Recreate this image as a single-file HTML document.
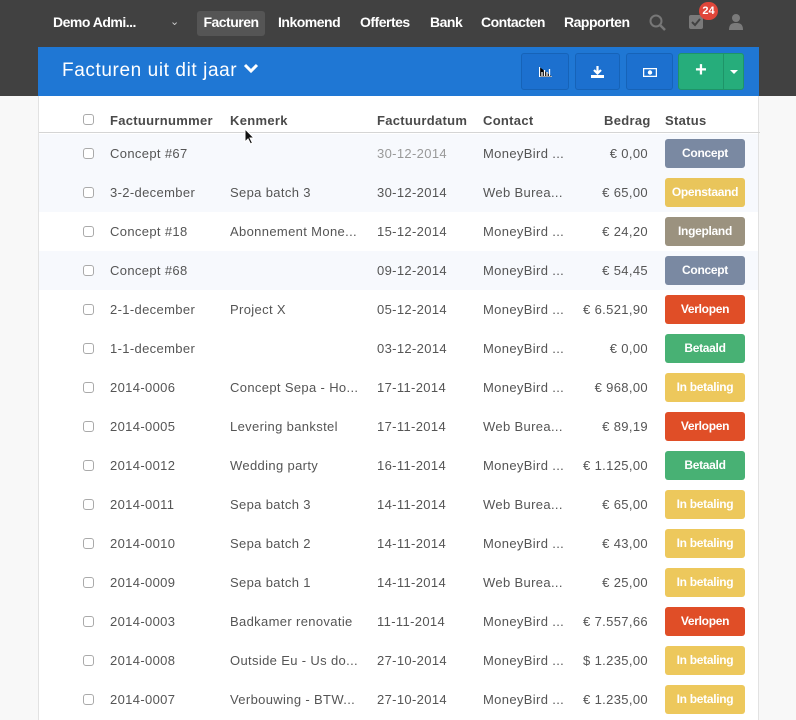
<!DOCTYPE html>
<html><head><meta charset="utf-8"><style>
*{box-sizing:border-box;margin:0;padding:0}
body{width:796px;height:720px;overflow:hidden;background:#f8f8f8;font-family:"Liberation Sans",sans-serif;position:relative}
.top{position:absolute;left:0;top:0;width:796px;height:96px;background:#414141}
.nav{position:absolute;top:11px;height:25px;line-height:23px;color:#fff;font-weight:bold;font-size:14px;letter-spacing:-0.5px}
.panel{position:absolute;left:38px;top:47px;width:721px;height:673px;background:#fff;border-left:1px solid #e2e2e2;border-right:1px solid #e2e2e2}
.blue{position:absolute;left:38px;top:47px;width:721px;height:49px;background:#1f77d4}
.btn{position:absolute;top:53px;height:37px;background:#1c70cf;border:1px solid #1663b8;border-radius:3px}
.g{background:#26ad7b;border-color:#1e9468}
.h{position:absolute;top:113px;font-weight:bold;font-size:13px;color:#4a4a4a;letter-spacing:0.3px}
.row{position:absolute;left:39px;width:719px;height:39px;font-size:13px;color:#555;letter-spacing:0.35px}
.row span{position:absolute;top:12px;white-space:nowrap}
.cb{position:absolute;left:44px;top:14px;width:11px;height:11px;border:1px solid #aaa;border-radius:3px;background:#fff}
.bd{position:absolute;left:626px;top:5px;width:80px;height:29px;border-radius:3px;color:#fff;font-weight:bold;font-size:12px;text-align:center;line-height:29px;letter-spacing:-0.3px}
.amt{right:110px;text-align:right}
</style></head><body>
<div class="top"></div>
<div class="nav" style="left:53px">Demo Admi...</div>
<div class="nav" style="left:170px;font-weight:normal;font-size:11px;color:#ccc">&#8964;</div>
<div class="nav" style="left:197px;width:68px;background:#555;border-radius:3px;text-align:center">Facturen</div>
<div class="nav" style="left:278px">Inkomend</div>
<div class="nav" style="left:360px">Offertes</div>
<div class="nav" style="left:430px">Bank</div>
<div class="nav" style="left:481px">Contacten</div>
<div class="nav" style="left:564px">Rapporten</div>
<svg style="position:absolute;left:649px;top:14px" width="18" height="18"><circle cx="7" cy="7" r="5.5" fill="none" stroke="#777" stroke-width="2"/><path d="M11 11l5 5" stroke="#777" stroke-width="2.5"/></svg>
<svg style="position:absolute;left:689px;top:14px" width="16" height="16"><rect x="0" y="1" width="14" height="14" rx="2" fill="#7a7a7a"/><path d="M3 8l3 3 5-6" stroke="#414141" stroke-width="2" fill="none"/></svg>
<div style="position:absolute;left:699px;top:2px;width:19px;height:18px;border-radius:9px;background:#e0463a;color:#fff;font-size:11px;font-weight:bold;text-align:center;line-height:18px">24</div>
<svg style="position:absolute;left:728px;top:13px" width="16" height="18"><circle cx="8" cy="5" r="4" fill="#7a7a7a"/><path d="M1 17c0-6 3-7 7-7s7 1 7 7z" fill="#7a7a7a"/></svg>
<div class="panel"></div>
<div class="blue"></div>
<div style="position:absolute;left:62px;top:60px;color:#fff;font-size:19px;letter-spacing:0.6px">Facturen uit dit jaar <svg width="16" height="12" style="vertical-align:1px"><path d="M2 2l6 6 6-6" stroke="#fff" stroke-width="3" fill="none"/></svg></div>
<div class="btn" style="left:521px;width:48px"><svg style="position:absolute;left:17px;top:13px" width="13" height="10"><path d="M0.5 0v10h13M3 9V5M5.5 9V3M8 9V5M10.5 9V2" stroke="#fff" stroke-width="1.3"/></svg></div>
<div class="btn" style="left:575px;width:45px"><svg style="position:absolute;left:15px;top:12px" width="13" height="12"><path d="M6.5 0v7M3 4l3.5 3.5L10 4" stroke="#fff" stroke-width="2.2" fill="none"/><rect x="0" y="9" width="13" height="3" fill="#fff"/></svg></div>
<div class="btn" style="left:626px;width:47px"><svg style="position:absolute;left:16px;top:14px" width="14" height="9"><rect x="0.5" y="0.5" width="13" height="8" fill="none" stroke="#fff" stroke-width="1.5"/><circle cx="7" cy="4.5" r="2.2" fill="#fff"/></svg></div>
<div class="btn g" style="left:678px;width:46px;border-radius:3px 0 0 3px"><div style="position:absolute;left:0;right:0;top:5px;text-align:center;color:#fff;font-size:20px;font-weight:bold">+</div></div>
<div class="btn g" style="left:723px;width:21px;border-radius:0 3px 3px 0"><div style="position:absolute;left:6px;top:16px;border:4px solid transparent;border-top:4px solid #fff;width:0;height:0"></div></div>
<div style="position:absolute;left:83px;top:114px;width:11px;height:11px;border:1px solid #aaa;border-radius:3px;background:#fff"></div>
<div class="h" style="left:110px">Factuurnummer</div>
<div class="h" style="left:230px">Kenmerk</div>
<div class="h" style="left:377px">Factuurdatum</div>
<div class="h" style="left:483px">Contact</div>
<div class="h" style="left:604px">Bedrag</div>
<div class="h" style="left:665px">Status</div>
<div style="position:absolute;left:39px;top:132px;width:721px;height:1px;background:#d5d5d5"></div>
<div class="row" style="top:134px;background:#f7f9fd"><div class="cb"></div><span style="left:71px">Concept #67</span><span style="left:338px;color:#999">30-12-2014</span><span style="left:444px">MoneyBird ...</span><span class="amt">€ 0,00</span><div class="bd" style="background:#7a89a2">Concept</div></div>
<div class="row" style="top:173px;background:#f7f9fd"><div class="cb"></div><span style="left:71px">3-2-december</span><span style="left:191px">Sepa batch 3</span><span style="left:338px">30-12-2014</span><span style="left:444px">Web Burea...</span><span class="amt">€ 65,00</span><div class="bd" style="background:#e9c55b">Openstaand</div></div>
<div class="row" style="top:212px"><div class="cb"></div><span style="left:71px">Concept #18</span><span style="left:191px">Abonnement Mone...</span><span style="left:338px">15-12-2014</span><span style="left:444px">MoneyBird ...</span><span class="amt">€ 24,20</span><div class="bd" style="background:#9b927f">Ingepland</div></div>
<div class="row" style="top:251px;background:#f7f9fd"><div class="cb"></div><span style="left:71px">Concept #68</span><span style="left:338px">09-12-2014</span><span style="left:444px">MoneyBird ...</span><span class="amt">€ 54,45</span><div class="bd" style="background:#7a89a2">Concept</div></div>
<div class="row" style="top:290px"><div class="cb"></div><span style="left:71px">2-1-december</span><span style="left:191px">Project X</span><span style="left:338px">05-12-2014</span><span style="left:444px">MoneyBird ...</span><span class="amt">€ 6.521,90</span><div class="bd" style="background:#e04e27">Verlopen</div></div>
<div class="row" style="top:329px"><div class="cb"></div><span style="left:71px">1-1-december</span><span style="left:338px">03-12-2014</span><span style="left:444px">MoneyBird ...</span><span class="amt">€ 0,00</span><div class="bd" style="background:#48b174">Betaald</div></div>
<div class="row" style="top:368px"><div class="cb"></div><span style="left:71px">2014-0006</span><span style="left:191px">Concept Sepa - Ho...</span><span style="left:338px">17-11-2014</span><span style="left:444px">MoneyBird ...</span><span class="amt">€ 968,00</span><div class="bd" style="background:#edc85c">In betaling</div></div>
<div class="row" style="top:407px"><div class="cb"></div><span style="left:71px">2014-0005</span><span style="left:191px">Levering bankstel</span><span style="left:338px">17-11-2014</span><span style="left:444px">Web Burea...</span><span class="amt">€ 89,19</span><div class="bd" style="background:#e04e27">Verlopen</div></div>
<div class="row" style="top:446px"><div class="cb"></div><span style="left:71px">2014-0012</span><span style="left:191px">Wedding party</span><span style="left:338px">16-11-2014</span><span style="left:444px">MoneyBird ...</span><span class="amt">€ 1.125,00</span><div class="bd" style="background:#48b174">Betaald</div></div>
<div class="row" style="top:485px"><div class="cb"></div><span style="left:71px">2014-0011</span><span style="left:191px">Sepa batch 3</span><span style="left:338px">14-11-2014</span><span style="left:444px">Web Burea...</span><span class="amt">€ 65,00</span><div class="bd" style="background:#edc85c">In betaling</div></div>
<div class="row" style="top:524px"><div class="cb"></div><span style="left:71px">2014-0010</span><span style="left:191px">Sepa batch 2</span><span style="left:338px">14-11-2014</span><span style="left:444px">MoneyBird ...</span><span class="amt">€ 43,00</span><div class="bd" style="background:#edc85c">In betaling</div></div>
<div class="row" style="top:563px"><div class="cb"></div><span style="left:71px">2014-0009</span><span style="left:191px">Sepa batch 1</span><span style="left:338px">14-11-2014</span><span style="left:444px">Web Burea...</span><span class="amt">€ 25,00</span><div class="bd" style="background:#edc85c">In betaling</div></div>
<div class="row" style="top:602px"><div class="cb"></div><span style="left:71px">2014-0003</span><span style="left:191px">Badkamer renovatie</span><span style="left:338px">11-11-2014</span><span style="left:444px">MoneyBird ...</span><span class="amt">€ 7.557,66</span><div class="bd" style="background:#e04e27">Verlopen</div></div>
<div class="row" style="top:641px"><div class="cb"></div><span style="left:71px">2014-0008</span><span style="left:191px">Outside Eu - Us do...</span><span style="left:338px">27-10-2014</span><span style="left:444px">MoneyBird ...</span><span class="amt">$ 1.235,00</span><div class="bd" style="background:#edc85c">In betaling</div></div>
<div class="row" style="top:680px"><div class="cb"></div><span style="left:71px">2014-0007</span><span style="left:191px">Verbouwing - BTW...</span><span style="left:338px">27-10-2014</span><span style="left:444px">MoneyBird ...</span><span class="amt">€ 1.235,00</span><div class="bd" style="background:#edc85c">In betaling</div></div>
<svg style="position:absolute;left:244px;top:128px" width="12" height="18"><path d="M1 1v13l3-3 2.5 5 2-1-2.5-5h4z" fill="#111" stroke="#fff" stroke-width="1"/></svg>
</body></html>
